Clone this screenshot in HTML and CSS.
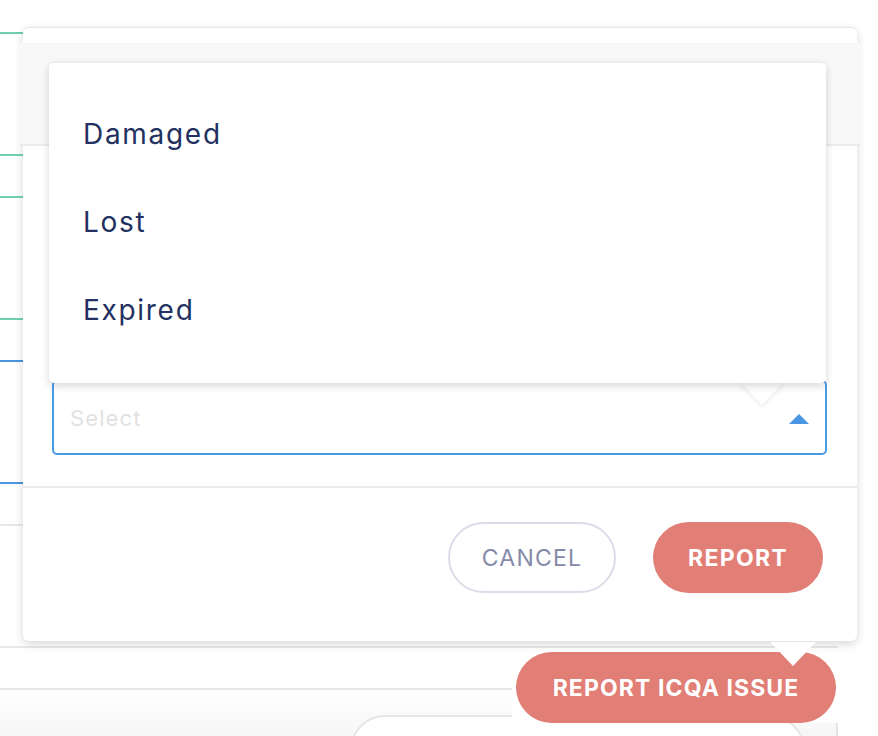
FILE: index.html
```html
<!DOCTYPE html>
<html>
<head>
<meta charset="utf-8">
<link rel="stylesheet" href="styles.css">
</head>
<body>
<div class="page">
  <div class="bg">
    <div class="row first green"></div>
    <div class="row tall green"></div>
    <div class="row short green"></div>
    <div class="row tall green"></div>
    <div class="row short blue"></div>
    <div class="row tall blue"></div>
    <div class="row short gray"></div>
    <div class="row tall gray"></div>
    <div class="row short gray"></div>
    <div class="bg-bottom">
      <div class="ghost-pill"></div>
      <div class="ghost-line"></div>
    </div>
  </div>

  <div class="fab-wrap">
    <button class="fab">REPORT ICQA ISSUE</button>
  </div>

  <div class="modal">
    <div class="modal-head"></div>
    <div class="modal-body">
      <div class="select">
        <span class="placeholder">Select</span>
        <span class="caret-up"></span>
      </div>
    </div>
    <div class="modal-foot">
      <button class="btn btn-cancel">CANCEL</button>
      <button class="btn btn-report">REPORT</button>
    </div>
    <div class="modal-arrow"></div>

    <div class="menu-arrow"></div>
    <ul class="menu">
      <li>Damaged</li>
      <li>Lost</li>
      <li>Expired</li>
    </ul>
  </div>
</div>
</body>
</html>
```

FILE: styles.css
```css
* { box-sizing: border-box; }
html, body { margin: 0; padding: 0; }
body {
  width: 878px;
  height: 736px;
  overflow: hidden;
  background: #ffffff;
  font-family: "Inter", "DejaVu Sans", sans-serif;
}
.page {
  position: relative;
  width: 878px;
  height: 736px;
  overflow: hidden;
}

/* background page */
.bg {
  display: flex;
  flex-direction: column;
  width: 838px;
  height: 736px;
  overflow: hidden;
}
.row { flex: none; border-bottom: 2px solid #e6e6e6; }
.row.first { height: 34px; }
.row.tall { height: 122px; }
.row.short { height: 42px; }
.row.green { border-bottom-color: #6fd0ae; }
.row.blue { border-bottom-color: #4a96e0; }
.row.gray { border-bottom-color: #e8e8e8; }
.bg-bottom {
  flex: 1;
  min-height: 0;
  position: relative;
  background: linear-gradient(#ffffff, #f6f6f6);
  padding: 25px 0 0 350px;
  overflow: hidden;
}
.ghost-pill {
  width: 455px;
  height: 70px;
  border: 2px solid #e6e6e6;
  border-radius: 40px;
  background: #ffffff;
}
.ghost-line {
  position: absolute;
  right: 0;
  top: 32px;
  width: 2px;
  height: 30px;
  background: #e4e4e4;
}

/* floating action button */
.fab-wrap {
  position: absolute;
  left: 512px;
  top: 650px;
  width: 328px;
  height: 73px;
  background: #ffffff;
  padding: 2px 0 0 4px;
}
.fab {
  width: 320px;
  height: 71px;
  border: none;
  border-radius: 36px;
  background: #e17e76;
  color: #ffffff;
  font-family: "Inter", "DejaVu Sans", sans-serif;
  font-weight: 700;
  font-size: 23px;
  letter-spacing: 1.1px;
  padding: 0;
}

/* modal */
.modal {
  position: absolute;
  left: 23px;
  top: 27px;
  width: 834px;
  height: 614px;
  background: #ffffff;
  border-radius: 6px;
  border-top: 1px solid #e6e6e6;
  box-shadow: 0 3px 10px rgba(0, 0, 0, 0.16);
  display: flex;
  flex-direction: column;
}
.modal-head {
  margin: 15px -3px 0;
  height: 103px;
  background: #f8f8f8;
  border-bottom: 2px solid #ececec;
}
.modal-body {
  padding: 234px 30px 31px 29px;
  border-bottom: 2px solid #ebebeb;
}
.select {
  height: 75px;
  border: 2px solid #4a9be6;
  border-radius: 5px;
  display: flex;
  align-items: center;
  justify-content: space-between;
  padding: 0 16px 0 16px;
}
.placeholder {
  font-size: 22px;
  color: #e2e2e2;
  letter-spacing: 1.1px;
}
.caret-up {
  width: 0;
  height: 0;
  border-left: 10px solid transparent;
  border-right: 10px solid transparent;
  border-bottom: 10px solid #4a96e3;
  margin-top: 2px;
}
.modal-foot {
  display: flex;
  justify-content: flex-end;
  gap: 37px;
  padding: 34px 34px 0 0;
}
.btn {
  height: 71px;
  border-radius: 36px;
  font-family: "Inter", "DejaVu Sans", sans-serif;
  font-size: 23px;
  padding: 0;
}
.btn-cancel {
  width: 168px;
  background: #ffffff;
  border: 2px solid #dddbe9;
  color: #858aa9;
  font-weight: 400;
  letter-spacing: 1.2px;
}
.btn-report {
  width: 170px;
  background: #e17e76;
  border: none;
  color: #ffffff;
  font-weight: 700;
  letter-spacing: 1.3px;
}
.modal-arrow {
  position: absolute;
  left: 747px;
  top: 614px;
  width: 0;
  height: 0;
  border-left: 23px solid transparent;
  border-right: 23px solid transparent;
  border-top: 24px solid #ffffff;
}

/* dropdown menu */
.menu {
  position: absolute;
  left: 26px;
  top: 34px;
  width: 777px;
  height: 321px;
  margin: 0;
  padding: 27px 0 30px 34px;
  list-style: none;
  background: #ffffff;
  border-radius: 5px;
  border-top: 1px solid #eaeaea;
  box-shadow: 0 3px 8px rgba(0, 0, 0, 0.16);
}
.menu li {
  height: 88px;
  display: flex;
  align-items: center;
  font-size: 28px;
  color: #22315f;
  letter-spacing: 1.7px;
}
.menu-arrow {
  position: absolute;
  left: 717px;
  top: 354px;
  width: 0;
  height: 0;
  border-left: 22px solid transparent;
  border-right: 22px solid transparent;
  border-top: 23px solid #ffffff;
  filter: drop-shadow(0 2px 2px rgba(0, 0, 0, 0.08));
}
```
